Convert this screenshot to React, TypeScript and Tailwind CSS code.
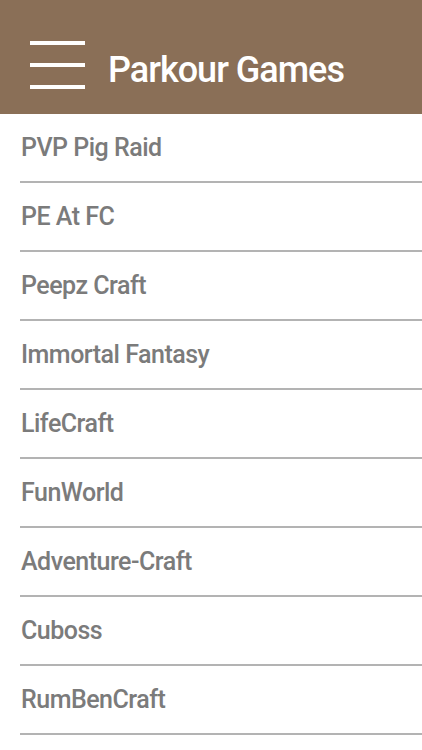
import React from "react";

const items = [
  "PVP Pig Raid",
  "PE At FC",
  "Peepz Craft",
  "Immortal Fantasy",
  "LifeCraft",
  "FunWorld",
  "Adventure-Craft",
  "Cuboss",
  "RumBenCraft",
];

export default function App() {
  return (
    <div className="w-[422px] h-[750px] overflow-hidden bg-white" style={{ fontFamily: "Roboto, 'Liberation Sans', sans-serif" }}>
      <div className="h-[114px] bg-[#8a6f57] flex items-center pl-[30px] pt-[16px]">
        <div className="flex flex-col gap-[18px] w-[55px]">
          <div className="h-[4px] bg-white" />
          <div className="h-[4px] bg-white" />
          <div className="h-[4px] bg-white" />
        </div>
        <div className="ml-[23px] text-white text-[36px] font-medium tracking-[-1px] leading-none mt-[10px]">Parkour Games</div>
      </div>
      <div className="pl-[20px]">
        {items.map((t) => (
          <div key={t} className="h-[69px] border-b-2 border-[#b3b3b3] flex items-center">
            <span className="pl-[1px] text-[25px] font-medium tracking-[-0.5px] text-[#7b7b7b] leading-none">{t}</span>
          </div>
        ))}
      </div>
    </div>
  );
}
